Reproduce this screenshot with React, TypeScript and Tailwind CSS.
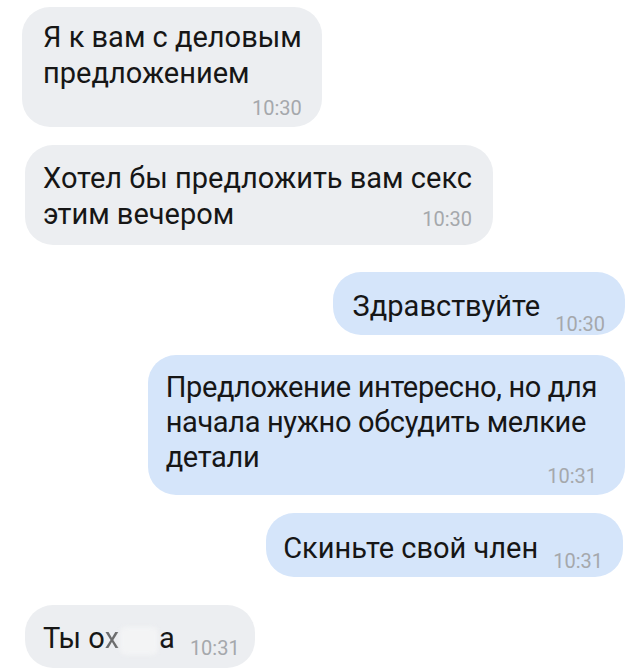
/** Chat thread with incoming and outgoing bubbles */

type Side = 'in' | 'out';

interface BubbleProps {
  side: Side;
  time: string;
  children: React.ReactNode;
  className?: string;
  // multi-line bubbles stack the time under the text; timeClass pulls it up or down
  stacked?: boolean;
  textClass?: string;
  timeClass?: string;
}

function Bubble({ side, time, children, className = '', stacked = false, textClass = 'leading-[36px]', timeClass = '' }: BubbleProps) {
  const tone = side === 'in' ? 'bg-[#eceef1] self-start' : 'bg-[#d5e5fa] self-end';
  const layout = stacked ? 'flex flex-col' : 'flex items-end';

  return (
    <div className={`${layout} rounded-[28px] whitespace-nowrap ${tone} ${className}`}>
      <div className={`text-[29px] text-[#161616] ${textClass}`}>{children}</div>
      <span className={`shrink-0 text-[20px] leading-[20px] text-[#a5a8ac] ${stacked ? 'self-end' : ''} ${timeClass}`}>
        {time}
      </span>
    </div>
  );
}

export default function App() {
  return (
    <div
      className="flex h-[670px] w-[640px] flex-col overflow-hidden bg-white"
      style={{ fontFamily: 'Roboto, "Noto Sans", sans-serif' }}
    >
      <Bubble
        side="in"
        time="10:30"
        stacked
        className="ml-[22px] mt-[7px] pl-[21px] pr-[20px] pt-[12px] pb-[9px]"
        timeClass="mt-[7px]"
      >
        Я к вам с деловым
        <br />
        предложением
      </Bubble>

      <Bubble
        side="in"
        time="10:30"
        stacked
        className="ml-[25px] mt-[18px] pl-[18px] pr-[21px] pt-[15px] pb-[16px]"
        timeClass="mt-[-23px]"
      >
        Хотел бы предложить вам секс
        <br />
        этим вечером
      </Bubble>

      <Bubble
        side="out"
        time="10:30"
        className="mr-[15px] mt-[27px] pl-[20px] pr-[20px] pt-[16px] pb-[11px]"
        timeClass="ml-[15px] mb-[-10px]"
      >
        Здравствуйте
      </Bubble>

      <Bubble
        side="out"
        time="10:31"
        stacked
        className="mr-[15px] mt-[20px] pl-[18px] pr-[28px] pt-[15px] pb-[9px]"
        textClass="leading-[35px] tracking-[-0.35px]"
        timeClass="mt-[-9px]"
      >
        Предложение интересно, но для
        <br />
        начала нужно обсудить мелкие
        <br />
        детали
      </Bubble>

      <Bubble
        side="out"
        time="10:31"
        className="mr-[17px] mt-[18px] pl-[17px] pr-[20px] pt-[17px] pb-[11px]"
        timeClass="ml-[15px] mb-[-5px]"
      >
        Скиньте свой член
      </Bubble>

      <Bubble
        side="in"
        time="10:31"
        className="ml-[25px] mt-[28px] pl-[18px] pr-[15px] pt-[15px] pb-[12px]"
        timeClass="ml-[15px] mb-[-2px]"
      >
        <span className="inline-flex items-baseline">
          Ты о<span className="opacity-60 blur-[0.6px]">х</span>
          <span className="mx-[1px] inline-block h-[28px] w-[38px] translate-y-[7px] rounded-[6px] bg-[#f3f4f5] blur-[2px]" />
          а
        </span>
      </Bubble>
    </div>
  );
}
